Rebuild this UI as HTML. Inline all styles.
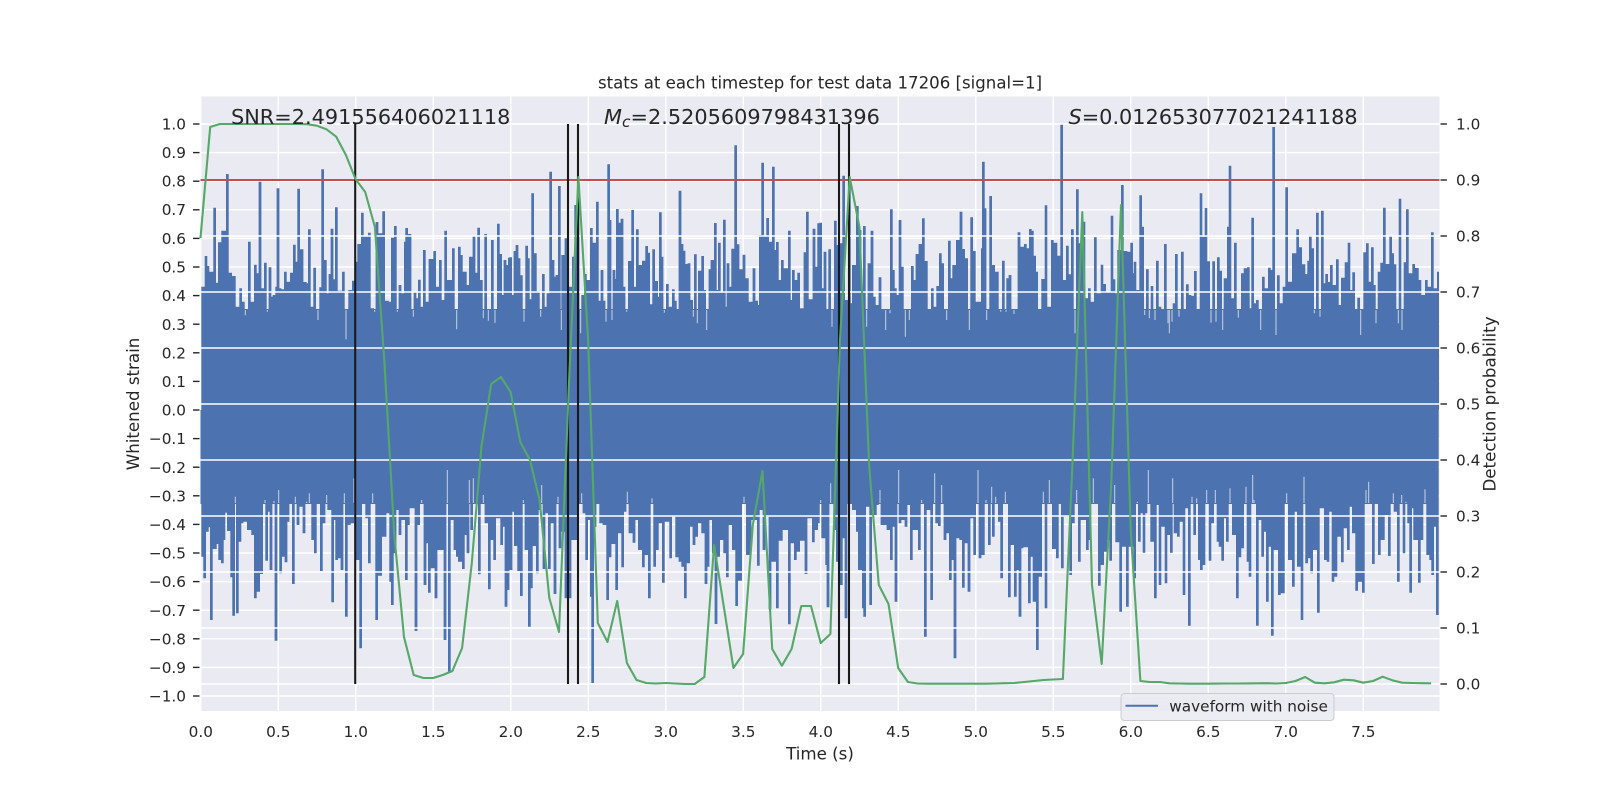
<!DOCTYPE html>
<html>
<head>
<meta charset="utf-8">
<style>
html,body{margin:0;padding:0;background:#fff;}
svg{display:block;}
text{font-family:"DejaVu Sans","Liberation Sans",sans-serif;fill:#262626;}
</style>
</head>
<body>
<svg id="s" xmlns="http://www.w3.org/2000/svg" width="1600" height="800" viewBox="0 0 1600 800">
<rect width="1600" height="800" fill="#fff"/>
<rect x="200" y="96.5" width="1239.5" height="614.5" fill="#EAEAF2"/>
<g id="gridL"></g>
<path id="wave" fill="#4C72B0" d=""></path>
<path id="slits" stroke="#EAEAF2" stroke-width="1" stroke-opacity="0.8" fill="none" d=""></path>
<g id="gridR"></g>
<line x1="200.5" x2="1439.5" y1="180" y2="180" stroke="#C44E52" stroke-width="2"/>
<g stroke="#1a1a1a" stroke-width="2.1">
<line x1="355.2" x2="355.2" y1="124" y2="684"/>
<line x1="568" x2="568" y1="124" y2="684"/>
<line x1="578" x2="578" y1="124" y2="684"/>
<line x1="839" x2="839" y1="124" y2="684"/>
<line x1="849" x2="849" y1="124" y2="684"/>
</g>
<polyline id="green" fill="none" stroke="#55A868" stroke-width="2.1" stroke-linejoin="round" points=""></polyline>
<g id="ticks" stroke="#262626" stroke-width="1.4"></g>
<g font-size="15.28">
<text x="186" y="129.5" text-anchor="end">1.0</text>
<text x="186" y="158" text-anchor="end">0.9</text>
<text x="186" y="186.5" text-anchor="end">0.8</text>
<text x="186" y="215" text-anchor="end">0.7</text>
<text x="186" y="244" text-anchor="end">0.6</text>
<text x="186" y="272.5" text-anchor="end">0.5</text>
<text x="186" y="301" text-anchor="end">0.4</text>
<text x="186" y="330" text-anchor="end">0.3</text>
<text x="186" y="358.5" text-anchor="end">0.2</text>
<text x="186" y="387" text-anchor="end">0.1</text>
<text x="186" y="415.5" text-anchor="end">0.0</text>
<text x="186" y="444" text-anchor="end">−0.1</text>
<text x="186" y="473" text-anchor="end">−0.2</text>
<text x="186" y="501.5" text-anchor="end">−0.3</text>
<text x="186" y="530" text-anchor="end">−0.4</text>
<text x="186" y="558.5" text-anchor="end">−0.5</text>
<text x="186" y="587" text-anchor="end">−0.6</text>
<text x="186" y="616" text-anchor="end">−0.7</text>
<text x="186" y="644.5" text-anchor="end">−0.8</text>
<text x="186" y="673" text-anchor="end">−0.9</text>
<text x="186" y="701.5" text-anchor="end">−1.0</text>
<text x="1456" y="129.5">1.0</text>
<text x="1456" y="185.5">0.9</text>
<text x="1456" y="241.5">0.8</text>
<text x="1456" y="297.5">0.7</text>
<text x="1456" y="353.5">0.6</text>
<text x="1456" y="409.5">0.5</text>
<text x="1456" y="465.5">0.4</text>
<text x="1456" y="521.5">0.3</text>
<text x="1456" y="577.5">0.2</text>
<text x="1456" y="633.5">0.1</text>
<text x="1456" y="689.5">0.0</text>
<text x="200.8" y="737" text-anchor="middle">0.0</text>
<text x="278.3" y="737" text-anchor="middle">0.5</text>
<text x="355.8" y="737" text-anchor="middle">1.0</text>
<text x="433.3" y="737" text-anchor="middle">1.5</text>
<text x="510.8" y="737" text-anchor="middle">2.0</text>
<text x="588.3" y="737" text-anchor="middle">2.5</text>
<text x="665.8" y="737" text-anchor="middle">3.0</text>
<text x="743.3" y="737" text-anchor="middle">3.5</text>
<text x="820.8" y="737" text-anchor="middle">4.0</text>
<text x="898.3" y="737" text-anchor="middle">4.5</text>
<text x="975.8" y="737" text-anchor="middle">5.0</text>
<text x="1053.3" y="737" text-anchor="middle">5.5</text>
<text x="1130.8" y="737" text-anchor="middle">6.0</text>
<text x="1208.3" y="737" text-anchor="middle">6.5</text>
<text x="1285.8" y="737" text-anchor="middle">7.0</text>
<text x="1363.3" y="737" text-anchor="middle">7.5</text>
</g>
<text x="820" y="88.5" text-anchor="middle" font-size="16.6">stats at each timestep for test data 17206 [signal=1]</text>
<text x="820" y="759.5" text-anchor="middle" font-size="16.67">Time (s)</text>
<text transform="translate(139,404) rotate(-90)" text-anchor="middle" font-size="16.67">Whitened strain</text>
<text transform="translate(1495.5,404) rotate(-90)" text-anchor="middle" font-size="16.67">Detection probability</text>
<text x="231" y="124" font-size="20.83">SNR=2.491556406021118</text>
<text x="604" y="124" font-size="20.83"><tspan font-style="italic">M</tspan><tspan font-style="italic" font-size="15.5" dy="3">c</tspan><tspan dy="-3">=2.5205609798431396</tspan></text>
<text x="1068.5" y="124" font-size="20.83"><tspan font-style="italic">S</tspan>=0.012653077021241188</text>
<rect x="1121" y="693.5" width="213" height="27" rx="3.5" fill="#EAEAF2" fill-opacity="0.85" stroke="#CCCCCC" stroke-width="1"/>
<line x1="1125.5" x2="1158" y1="705.7" y2="705.7" stroke="#4C72B0" stroke-width="2"/>
<text x="1169.3" y="711.5" font-size="15.28">waveform with noise</text>
</svg>
<script>
(function(){
var T=[
[200,"8,470;18,378;24,408;34,425;44,233;50,458;58,337;68,302;82,132;92,428;103,438;112,530;122,475;130,515;136,556;148,335;154,515;166,404;172,430;180,155;187,475;196,398;202,545;210,412;216,500;222,495;230,470;234,175;240,475;248,478;256,425;266,455;274,428;283,344;288,395;296,176;306,358;316,456;320,460;328,298;336,530;344,413;354,570;362,472;368,118;376,390;384,490;390,432;396,296;402,448;409,232;418,482;430,425;438,628;449,480;460,452;470,395;476,342;487,248;500,317;508,308;518,535;524,545;531,276;544,310;551,244;562,512;570,515;577,323;586,288;592,545;600,465;608,490;616,335;620,294;630,312;640,560;645,485;650,505;658,449;665,530;673,360;682,515;690,387;704,363;713,470;721,390;729,510;737,302;745,450;752,450;760,355;770,598;778,350;784,375;796,425;802,465;811,380;822,318;830,428;836,293;844,450;850,565;857,312;865,572;877,330;885,578;895,281;902,372;908,495;915,390;921,405;928,383"],
[510,"2,382;8,495;15,363;21,345;27,385;34,436;42,575;50,347;55,385;61,508;68,190;76,370;85,484;92,560;100,432;108,530;114,490;122,125;129,390;135,440;141,435;148,168;154,600;158,375;168,325;180,470;190,380;197,225;204,200;212,610;218,495;226,432;234,450;244,294;252,338;262,215;270,512;276,420;282,512;288,575;296,103;300,270;306,570;312,420;316,447;322,237;330,278;336,266;342,470;350,545;358,393;368,240;376,470;382,298;390,405;400,392;410,348;416,368;424,523;431,358;440,453;446,500;451,247;456,380;463,548;472,462;480,530;490,478;496,512;503,540;510,182;516,342;522,362;530,402;537,400;545,510;550,560;556,373;562,580;568,422;578,378;584,480;590,600;600,418;606,390;616,279;622,480;628,338;634,485;643,269;648,530;654,400;660,470;668,356;677,46;684,343;691,418;702,374;712,445;720,515;732,415;740,512;745,525;751,315;758,98;765,318;773,264;780,335;790,110;795,360;802,336;808,450;817,390;828,415;838,302;844,510;850,420;857,450;866,428;875,535;885,367;892,245;900,508;912,296;918,410;926,280"],
[820,"2,278;8,475;15,365;22,540;29,358;36,590;46,272;52,345;64,340;71,137;78,510;88,140;95,520;100,405;112,228;120,300;126,480;133,288;140,590;147,400;156,302;163,500;170,525;180,442;190,540;197,600;210,550;214,238;220,420;226,475;232,495;240,270;247,410;256,620;268,570;277,408;285,450;291,372;300,342;310,265;319,393;327,542;337,475;344,530;353,468;361,370;368,400;380,570;388,332;396,445;401,405;412,330;423,245;431,357;440,385;448,600;455,262;463,363;477,515;487,355;490,95;495,235;500,570;512,198;521,405;532,425;542,545;550,392;558,545;563,445;570,435;582,552;597,307;606,350;616,342;622,355;631,297;637,302;644,377;650,425;660,540;668,447;678,226;690,530;697,330;708,338;717,377;725,-18;733,450;742,347;750,433;757,298;765,610;772,178;780,340;792,275;802,505;808,475;817,515;826,322;834,490;846,404;854,462;866,485;876,257;882,448;890,490;896,360;907,165;918,363;928,365"],
[1130,"5,338;12,430;15,395;20,480;32,196;38,290;44,555;52,418;58,565;66,468;75,570;82,392;90,530;94,540;106,342;114,580;118,610;126,575;132,520;139,372;147,560;157,365;165,540;172,463;180,495;188,497;196,423;204,540;213,190;218,320;228,234;236,394;243,578;251,394;258,575;265,382;272,422;278,600;285,445;295,290;300,107;306,505;316,338;325,563;337,430;345,415;355,412;362,535;368,263;374,520;382,510;392,600;400,440;408,475;418,413;425,420;431,-9;438,615;445,436;452,520;462,470;470,172;480,455;490,370;503,298;512,352;522,403;530,432;536,392;541,316;548,355;553,550;562,248;570,560;577,242;584,460;590,432;598,456;604,405;612,465;622,388;630,525;637,443;648,397;657,338;665,480;671,427;678,540;686,503;692,615;704,367;712,340;720,455;727,352;733,465;738,580;747,425;755,398;763,233;773,402;782,318;788,370;795,403;805,580;810,206;816,600;825,397;832,238;842,430;851,402;862,414;870,450;880,495;889,450;896,470;907,307;917,475;925,425"]
];
var B=[
[200,"2,100;8,260;14,325;22,185;28,172;34,450;46,237;52,222;59,270;67,280;72,210;78,128;85,183;95,322;101,437;106,80;112,430;120,215;126,160;134,155;145,180;152,180;158,195;166,385;176,365;185,312;195,90;200,272;207,125;213,300;222,93;228,512;236,60;242,310;250,260;258,277;264,155;272,100;280,342;286,80;294,165;302,110;312,190;320,95;328,70;338,210;346,250;354,100;364,303;372,160;380,75;386,120;398,397;404,150;410,270;418,265;426,300;433,70;439,440;448,165;458,160;462,25;472,270;482,535;490,100;500,145;508,280;518,70;530,450;542,317;548,200;555,200;565,130;572,335;577,405;585,250;594,120;600,195;608,150;619,330;625,165;636,115;641,115;648,483;656,165;665,90;675,345;682,220;688,368;695,295;708,385;716,240;724,240;735,510;742,0;748,605;755,150;765,240;772,260;778,275;790,297;797,195;804,250;808,30;815,180;820,25;838,313;850,75;858,160;868,358;875,210;884,270;890,145;905,225;912,170;918,410;924,360"],
[510,"3,300;10,125;16,228;26,303;34,378;40,90;48,240;58,470;64,355;72,228;82,310;90,120;95,45;102,297;110,130;118,297;126,160;135,372;144,80;150,235;160,185;168,385;180,385;190,210;198,210;208,100;215,70;222,130;230,270;238,150;244,380;248,639;255,170;265,100;272,160;282,165;293,390;300,262;310,222;320,360;330,190;338,292;345,125;352,65;360,190;372,218;380,150;388,240;400,292;408,255;418,385;426,85;434,290;442,240;452,160;460,338;470,155;482,265;490,140;500,262;510,275;518,290;526,385;536,280;544,170;552,225;560,200;570,160;578,190;588,342;594,290;604,150;610,250;618,462;626,260;635,210;644,250;652,322;660,165;670,240;680,408;692,332;702,80;712,255;720,255;730,150;745,287;750,120;762,240;772,140;780,418;790,275;802,415;814,212;824,180;838,463;848,220;856,270;866,245;878,212;888,312;898,145;910,217;920,180;925,160"],
[820,"2,90;8,205;20,285;24,412;32,40;44,180;52,275;64,345;72,205;78,445;86,45;100,120;112,185;118,300;130,415;134,440;142,110;152,405;160,125;166,135;172,105;180,60;186,165;196,165;204,180;214,270;220,170;228,395;236,0;240,160;250,150;258,170;266,105;274,270;285,180;298,240;305,90;316,500;324,120;335,390;344,10;350,160;358,168;365,45;375,210;382,190;391,330;397,270;405,565;412,205;422,210;430,353;438,220;447,365;452,145;464,255;474,0;480,265;490,255;498,90;508,225;515,50;520,200;527,80;538,155;545,325;556,65;568,382;574,225;586,380;592,300;600,440;606,235;614,232;628,400;634,260;642,395;652,540;662,320;670,65;678,415;688,30;700,237;712,265;720,100;727,295;742,140;752,315;760,160;770,60;778,275;788,150;802,240;810,210;820,25;838,347;848,285;858,245;865,210;872,272;884,45;890,217;902,425;910,230;922,410"],
[1130,"2,230;14,325;22,95;28,215;36,130;42,248;48,130;55,0;65,215;76,385;82,105;90,345;98,170;108,340;118,195;124,248;128,25;135,190;145,200;152,155;162,375;170,115;178,467;186,80;194,195;200,85;208,270;214,300;222,285;230,60;240,272;248,160;256,60;264,215;270,230;278,272;284,145;292,215;300,55;310,195;322,385;330,262;338,235;348,50;354,275;360,320;368,15;372,90;382,467;390,150;398,260;404,185;412,395;420,230;427,497;436,240;448,375;460,370;470,70;478,270;490,350;498,125;505,290;516,450;522,20;530,280;538,265;545,310;552,240;565,428;572,115;586,270;594,275;602,125;609,335;618,320;630,200;637,277;645,175;655,240;662,110;670,190;680,362;688,335;700,368;708,60;716,35;730,282;740,100;748,255;760,210;770,135;778,258;790,70;795,125;805,335;815,75;822,250;828,95;836,160;842,368;848,115;854,210;868,338;876,210;885,58;893,255;902,270;908,315;915,170;922,435"]
];
function parse(sets,y0){
  var out=[];
  sets.forEach(function(p){
    p[1].split(";").forEach(function(s){
      var a=s.split(",");
      out.push([p[0]+(+a[0])/3,y0+(+a[1])/3]);
    });
  });
  return out;
}
function r(x1,x2,y1,y2){
  return "M"+x1.toFixed(1)+" "+y1.toFixed(1)+"H"+x2.toFixed(1)+"V"+y2.toFixed(1)+"H"+x1.toFixed(1)+"Z";
}
var d="",sl="";
var w=1.35;
var TOPC=309, BOTC=504;
var top=parse(T,130), bot=parse(B,470);
top.forEach(function(p,i){
  var y=Math.min(p[1],TOPC);
  if(p[1]>TOPC+2){ sl+="M"+p[0].toFixed(1)+" "+(TOPC+1)+"V"+p[1].toFixed(1); }
  d+=r(Math.max(200.5,p[0]-w),Math.min(1439,p[0]+w),y,410);
  var n=top[i+1];
  if(n){ d+=r(p[0],n[0],Math.max(y,Math.min(n[1],TOPC)),410); }
});
bot.forEach(function(p,i){
  var y=Math.max(p[1],BOTC);
  if(p[1]<BOTC-2){ sl+="M"+p[0].toFixed(1)+" "+p[1].toFixed(1)+"V"+(BOTC-1); }
  d+=r(Math.max(200.5,p[0]-w),Math.min(1439,p[0]+w),410,y);
  var n=bot[i+1];
  if(n){ d+=r(p[0],n[0],410,Math.min(y,Math.max(n[1],BOTC))); }
});
document.getElementById("wave").setAttribute("d",d);
document.getElementById("slits").setAttribute("d",sl);
var NS="http://www.w3.org/2000/svg";
function line(g,x1,y1,x2,y2,col,wd){
  var l=document.createElementNS(NS,"line");
  l.setAttribute("x1",x1);l.setAttribute("y1",y1);l.setAttribute("x2",x2);l.setAttribute("y2",y2);
  if(col){l.setAttribute("stroke",col);l.setAttribute("stroke-width",wd);}
  g.appendChild(l);
}
var gl=document.getElementById("gridL"),gr=document.getElementById("gridR"),tk=document.getElementById("ticks");
var i;
for(i=0;i<=20;i++){
  var y=124+i*28.6;
  line(gl,200.5,y,1439.5,y,"#fff",1.4);
  line(tk,193,y,199.5,y);
}
for(i=0;i<16;i++){
  var xx=200.8+i*77.5;
  line(gl,xx,96.5,xx,711,"#fff",1.4);
}
for(i=0;i<=10;i++){
  var yy=124+i*56;
  line(gr,200.5,yy,1439.5,yy,"#fff",1.4);
  line(tk,1440.5,yy,1447,yy);
}
var G=[238,127,124,124,124,124,124,124,124,124,124,124.2,125.7,129.3,136.7,155,179,192,227,365,535,637,675,678,678,675,671,648,563,446,384,377,392,442,460,500,598,632,390,177,340,623,642,601,663,680,683,683.5,683,683.5,684,684,677,545,606.7,668,654,525,471,649,665.7,649,606,606,643,634,340,177,227,465,585,604,668,682,683.5,683.7,683.7,683.7,683.7,683.7,683.7,683.7,683.5,683.2,683,682,681,680,679.5,679,460,212,585,664,480,205,530,681,682,682,683.3,683.5,683.7,683.7,683.7,683.6,683.5,683.5,683.4,683.3,683.2,683.5,683,681,677,682.7,683.3,682.3,679.7,680.3,682.7,681,676.7,680.3,682.7,683,683.2,683.3];
var pts=G.map(function(v,k){return (200.5+k*9.69).toFixed(1)+","+v;}).join(" ");
document.getElementById("green").setAttribute("points",pts);
})();
</script>
</body>
</html>
